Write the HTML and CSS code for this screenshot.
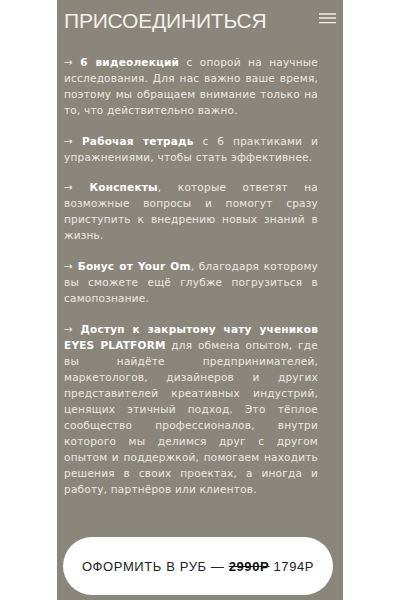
FILE: index.html
```html
<!DOCTYPE html>
<html lang="ru">
<head>
<meta charset="utf-8">
<link rel="stylesheet" href="styles.css">
</head>
<body>
<div class="panel">
  <header class="head">
    <h1 class="title">ПРИСОЕДИНИТЬСЯ</h1>
    <svg class="burger" width="17" height="11" viewBox="0 0 17 11"><path d="M0 1H17M0 5H17M0 9.6H17" stroke="#f2f0eb" stroke-width="1.4"/></svg>
  </header>
  <div class="content">
    <p>→ <b>6 видеолекций</b> с опорой на научные исследования. Для нас важно ваше время, поэтому мы обращаем внимание только на то, что действительно важно.</p>
    <p>→ <b>Рабочая тетрадь</b> с 6 практиками и упражнениями, чтобы стать эффективнее.</p>
    <p>→ <b>Конспекты</b>, которые ответят на возможные вопросы и помогут сразу приступить к внедрению новых знаний в жизнь.</p>
    <p>→ <b>Бонус от Your Om</b>, благодаря которому вы сможете ещё глубже погрузиться в самопознание.</p>
    <p>→ <b>Доступ к закрытому чату учеников EYES PLATFORM</b> для обмена опытом, где вы найдёте предпринимателей, маркетологов, дизайнеров и других представителей креативных индустрий, ценящих этичный подход. Это тёплое сообщество профессионалов, внутри которого мы делимся друг с другом опытом и поддержкой, помогаем находить решения в своих проектах, а иногда и работу, партнёров или клиентов.</p>
  </div>
  <div class="cta">
    <button class="btn">ОФОРМИТЬ В РУБ — <s>2990Р</s> 1794Р</button>
  </div>
</div>
</body>
</html>
```
FILE: styles.css
```css
html, body {
  margin: 0;
  padding: 0;
  background: #ffffff;
}
body {
  width: 400px;
  height: 600px;
  overflow: hidden;
}
.panel {
  margin-left: 57px;
  width: 286px;
  height: 600px;
  background: #8b867b;
  display: flex;
  flex-direction: column;
  box-sizing: border-box;
  padding: 0 25px 0 7px;
}
.head {
  display: flex;
  justify-content: space-between;
  align-items: flex-start;
  padding-top: 9px;
  margin-right: -22px;
}
.title {
  margin: 0;
  font-family: "Liberation Sans", Arial, sans-serif;
  font-weight: 400;
  font-size: 21px;
  line-height: 24px;
  color: #f2f0eb;
  letter-spacing: -0.2px;
}
.burger {
  margin-top: 4px;
  margin-right: 4px;
}
.content {
  margin-top: 21px;
  font-family: "DejaVu Sans", sans-serif;
  font-size: 10.5px;
  line-height: 16px;
  color: #ebe8e2;
  letter-spacing: 0.22px;
}
.content p {
  margin: 0 0 15px;
  text-align: justify;
}
.content p:nth-child(2) {
  margin-bottom: 14px;
}
.content b {
  font-weight: 700;
  color: #ffffff;
}
.cta {
  margin-top: auto;
  padding: 0 0 5px 0;
}
.btn {
  display: block;
  width: 270px;
  height: 58px;
  border: none;
  border-radius: 29px;
  background: #ffffff;
  font-family: "Liberation Sans", Arial, sans-serif;
  font-size: 13px;
  letter-spacing: 0.6px;
  color: #222222;
  padding: 0;
  margin-left: -1px;
}
.btn s {
  font-weight: 700;
  color: #111111;
}
```
